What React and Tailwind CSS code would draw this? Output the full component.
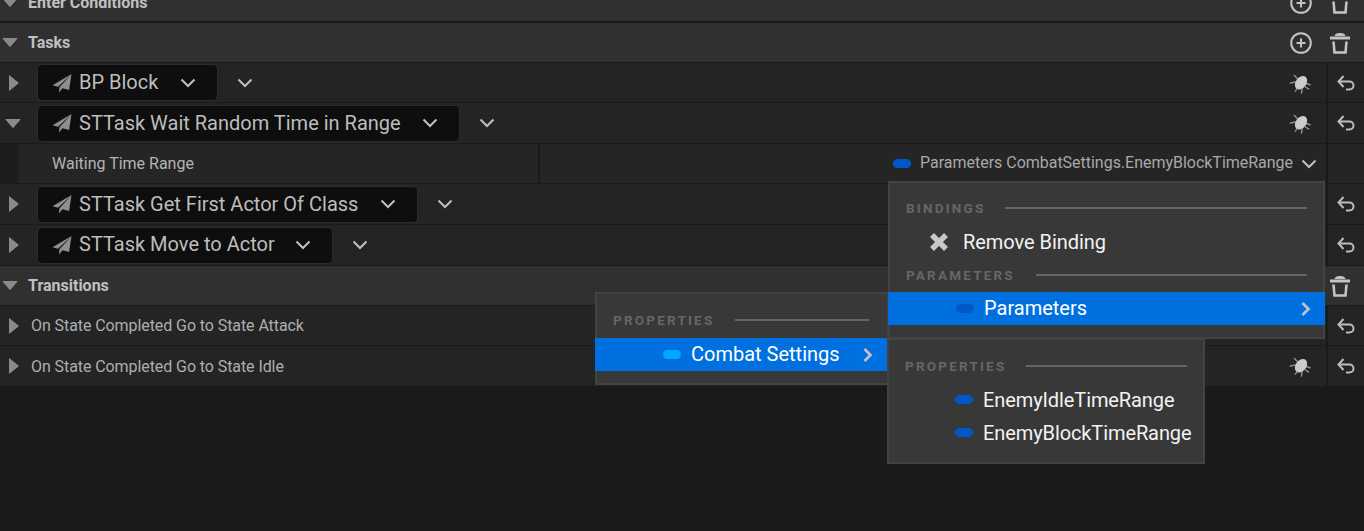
const Triangle = ({ open }) =>
    open ? (
        <svg width="16" height="11" viewBox="0 0 16 11"><path d="M1 1h14a.5.5 0 0 1 .4.8L8.400 9.800a.5.5 0 0 1-.8 0L.6 1.800A.5.5 0 0 1 1 1z" fill="#8a8a8a" /></svg>
    ) : (
        <svg width="11" height="16" viewBox="0 0 11 16"><path d="M1 .8v14.400a.5.5 0 0 0 .8.4l8.600-7.200a.5.5 0 0 0 0-.8L1.800.4A.5.5 0 0 0 1 .8z" fill="#8a8a8a" /></svg>
    );

const Chevron = () => (
    <svg width="16" height="10" viewBox="0 0 16 10" fill="none" stroke="#c0c0c0" strokeWidth="2">
        <path d="M1.500 1.500L8 8l6.500-6.500" />
    </svg>
);

const Plane = () => (
    <svg width="20" height="20" viewBox="0 0 20 20" fill="#8f8f8f">
        <path d="M19.500 1L0.500 12.300l5.600 1.400z" />
        <path d="M19.500 1L7.500 14.200l-.6 5.300 3.600-4.300 6.600 1.800z" />
    </svg>
);

const Bug = () => (
    <svg width="24" height="24" viewBox="0 0 24 24">
        <g stroke="#8c8c8c" strokeWidth="1.500" fill="none">
            <path d="M.7 12.300l6-1.600M5 4l4 4.300M8.300 17.300L6 20.700M13.300 17.300l-1 5.400M16.700 12.300l5 1.700M16 15.700l4 2.600" />
        </g>
        <ellipse cx="12" cy="11.700" rx="5.300" ry="7.400" transform="rotate(38 12 11.700)" fill="#cccccc" />
    </svg>
);

const Undo = () => (
    <svg width="18" height="16" viewBox="0 0 18 16" fill="none" stroke="#bdbdbd" strokeWidth="2">
        <path d="M6.500 1L1.500 6.500 6.500 12" />
        <path d="M2 6.500h10.500a4 4 0 0 1 0 8H9" />
    </svg>
);

const PlusCircle = () => (
    <svg width="22" height="22" viewBox="0 0 22 22" fill="none" stroke="#c4c4c4" strokeWidth="2">
        <circle cx="11" cy="11" r="9.800" />
        <path d="M11 6.500v9M6.500 11h9" />
    </svg>
);

const Trash = () => (
    <svg width="20" height="22" viewBox="0 0 20 22" fill="none" stroke="#c4c4c4">
        <path d="M5 3.500C5.500 .8 14.500 .8 15 3.500z" fill="#c4c4c4" />
        <path d="M0 6h20" strokeWidth="3" />
        <path d="M3.500 9.500l1 11h11l1-11" strokeWidth="2.600" />
    </svg>
);

const Pill = ({ color }) => <span className={`inline-block w-[18px] h-[9px] rounded-full shrink-0 ${color}`} />;

const Header = ({ label, h = "h-[39px]" }) => (
    <div className={`flex items-center ${h} bg-[#303030] pl-[2px] pr-[14px]`}>
        <Triangle open />
        <span className="ml-[10px] text-[16px] font-bold text-[#c0c0c0] leading-none">{label}</span>
        <div className="ml-auto flex items-center gap-[18px]">
            <PlusCircle />
            <Trash />
        </div>
    </div>
);

const RightCell = ({ bug = true, undo = true }) => (
    <div className="ml-auto flex items-center h-full">
        {bug && (
            <div className="mr-[13px] flex">
                <Bug />
            </div>
        )}
        <div className="w-[38px] h-full border-l-2 border-[#1a1a1a] flex items-center justify-center">
            {undo && <Undo />}
        </div>
    </div>
);

const TaskRow = ({ name, open, bug, h = "h-[40px]", textClass = "mr-[20px]" }) => (
    <div className={`flex items-center ${h} bg-[#242424]`}>
        <div className={open ? "w-[37px] pl-[5px]" : "w-[37px] pl-[8px]"}>
            <Triangle open={open} />
        </div>
        <div className="flex items-center h-[37px] pl-[14px] pr-[21px] rounded-[5px] bg-[#0e0e0e] border border-[#2c2c2c] text-[#bdbdbd] text-[20px]">
            <Plane />
            <span className={`ml-[7px] whitespace-nowrap ${textClass}`}>{name}</span>
            <Chevron />
        </div>
        <div className="ml-[19px]">
            <Chevron />
        </div>
        <RightCell bug={bug} />
    </div>
);

const DetailRow = () => (
    <div className="flex items-center h-[39px] bg-[#252525]">
        <div className="w-[18px] h-full bg-[#1d1d1d]" />
        <div className="w-[522px] h-full flex items-center pl-[34px] text-[16px] text-[#b4b4b4] border-r-2 border-[#1a1a1a]">
            Waiting Time Range
        </div>
        <div className="flex items-center flex-1 justify-end h-full pr-[9px] text-[16px] text-[#a8a8a8] whitespace-nowrap">
            <Pill color="bg-[#0058c8]" />
            <span className="ml-[9px] mr-[8px] mb-[2px] tracking-[-0.02px]">Parameters CombatSettings.EnemyBlockTimeRange</span>
            <Chevron />
        </div>
        <div className="w-[38px] h-full border-l-2 border-[#1a1a1a]" />
    </div>
);

const TransitionRow = ({ name, bug, h = "h-[40px]", textClass = "" }) => (
    <div className={`flex items-center ${h} bg-[#242424]`}>
        <div className="w-[31px] pl-[8px]">
            <Triangle />
        </div>
        <span className={`text-[16px] tracking-[-0.08px] text-[#aeaeae] ${textClass}`}>{name}</span>
        <RightCell bug={bug} />
    </div>
);

const SectionTitle = ({ label, lineLeft = "ml-[20px]", pr = "pr-[16px]" }) => (
    <div className={`flex items-center h-[24px] pl-[16px] ${pr}`}>
        <span className="text-[13.5px] font-bold tracking-[2.2px] text-[#666666] whitespace-nowrap">{label}</span>
        <span className={`h-[2px] flex-1 bg-[#656565] ${lineLeft}`} />
    </div>
);

const ChevronRight = () => (
    <svg width="12" height="16" viewBox="0 0 12 16" fill="none" stroke="#c4c4c4" strokeWidth="2.600">
        <path d="M2.500 2l6 6-6 6" />
    </svg>
);

export default function App() {
    return (
        <div className="relative w-[1364px] h-[531px] overflow-hidden bg-[#1a1a1a] font-['Roboto',sans-serif]">
            <div className="-mt-[16px] flex flex-col">
                <Header label="Enter Conditions" h="h-[37px]" />
                <div className="h-[2px]" />
                <Header label="Tasks" />
                <div className="h-px" />
                <TaskRow name="BP Block" bug h="h-[39px]" textClass="mr-[22px] mb-[2px]" />
                <div className="h-px" />
                <TaskRow name="STTask Wait Random Time in Range" open bug textClass="mr-[21px]" />
                <div className="h-px" />
                <DetailRow />
                <div className="h-px" />
                <TaskRow name="STTask Get First Actor Of Class" textClass="mr-[22px]" />
                <div className="h-px" />
                <TaskRow name="STTask Move to Actor" textClass="mr-[20px] mb-[2px]" />
                <div className="h-px" />
                <Header label="Transitions" />
                <div className="h-px" />
                <TransitionRow name="On State Completed Go to State Attack" h="h-[39px]" />
                <div className="h-px" />
                <TransitionRow name="On State Completed Go to State Idle" bug textClass="mt-[2px]" />
            </div>

            {/* Properties submenu */}
            <div className="absolute left-[595px] top-[292px] w-[294px] h-[93px] bg-[#383838] border-2 border-[#434343] pt-[14px]">
                <SectionTitle label="PROPERTIES" lineLeft="ml-[21px]" pr="pr-[18px]" />
                <div className="flex items-center h-[33px] -mx-[2px] mt-[6px] pl-[68px] pr-[15px] bg-[#0070e0] text-[20px] text-white">
                    <Pill color="bg-[#00a8ff]" />
                    <span className="ml-[10px] mb-[2px]">Combat Settings</span>
                    <span className="ml-auto flex">
                        <ChevronRight />
                    </span>
                </div>
            </div>

            {/* Binding menu */}
            <div className="absolute left-[888px] top-[181px] w-[437px] h-[158px] bg-[#383838] border-2 border-[#434343] pt-[13px]">
                <SectionTitle label="BINDINGS" />
                <div className="flex items-center h-[42px] mt-px pl-[39px] text-[20px] tracking-[-0.05px] text-[#f2f2f2]">
                    <svg width="20" height="20" viewBox="0 0 20 20" fill="none" stroke="#c8c8c8" strokeWidth="5.500">
                        <path d="M3 3l14 14M17 3L3 17" />
                    </svg>
                    <span className="ml-[14px]">Remove Binding</span>
                </div>
                <SectionTitle label="PARAMETERS" lineLeft="ml-[21px]" />
                <div className="flex items-center h-[33px] -mx-[2px] mt-[5px] pl-[68px] pr-[13px] bg-[#0070e0] text-[20px] text-white">
                    <Pill color="bg-[#0058c8]" />
                    <span className="ml-[10px] mb-[2px]">Parameters</span>
                    <span className="ml-auto flex">
                        <ChevronRight />
                    </span>
                </div>
            </div>

            {/* Combat settings submenu */}
            <div className="absolute left-[887px] top-[338px] w-[318px] h-[126px] bg-[#383838] border-2 border-[#434343] pt-[14px]">
                <SectionTitle label="PROPERTIES" />
                <div className="flex items-center h-[33px] mt-[5px] pl-[66px] text-[20px] tracking-[-0.1px] text-[#f2f2f2]">
                    <Pill color="bg-[#0058c8]" />
                    <span className="ml-[10px]">EnemyIdleTimeRange</span>
                </div>
                <div className="flex items-center h-[33px] pl-[66px] text-[20px] tracking-[-0.1px] text-[#f2f2f2]">
                    <Pill color="bg-[#0058c8]" />
                    <span className="ml-[10px]">EnemyBlockTimeRange</span>
                </div>
            </div>
        </div>
    );
}
